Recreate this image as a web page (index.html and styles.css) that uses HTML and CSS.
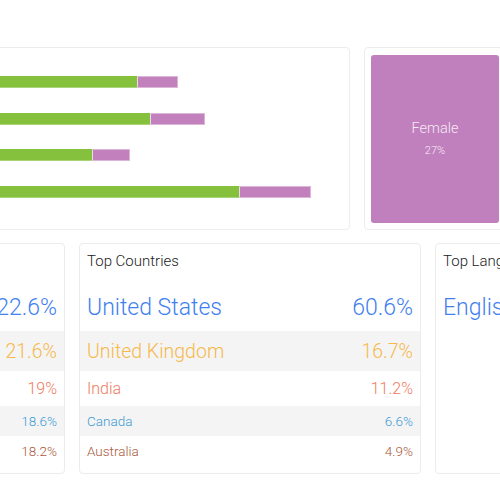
FILE: index.html
```html
<!DOCTYPE html>
<html>
<head>
<meta charset="utf-8">
<link rel="stylesheet" href="styles.css">
</head>
<body>
<div class="dash">
  <div class="row-top">
    <div class="card card-bars">
      <div class="bars">
        <div class="bar"><span class="seg seg-m" style="width:177px"></span><span class="seg seg-f" style="width:41px"></span></div>
        <div class="bar"><span class="seg seg-m" style="width:190px"></span><span class="seg seg-f" style="width:55px"></span></div>
        <div class="bar"><span class="seg seg-m" style="width:132px"></span><span class="seg seg-f" style="width:38px"></span></div>
        <div class="bar"><span class="seg seg-m" style="width:279px"></span><span class="seg seg-f" style="width:72px"></span></div>
      </div>
    </div>
    <div class="card card-gender">
      <div class="tile">
        <div class="tile-label">Female</div>
        <div class="tile-value">27%</div>
      </div>
    </div>
  </div>
  <div class="row-bottom">
    <div class="card list-card">
      <div class="card-title"></div>
      <div class="item s1 c-blue"><span></span><span>22.6%</span></div>
      <div class="item s2 c-yellow alt"><span></span><span>21.6%</span></div>
      <div class="item s3 c-coral"><span></span><span>19%</span></div>
      <div class="item s4 c-sky alt"><span></span><span>18.6%</span></div>
      <div class="item s5 c-brown"><span></span><span>18.2%</span></div>
    </div>
    <div class="card list-card">
      <div class="card-title">Top Countries</div>
      <div class="item s1 c-blue"><span>United States</span><span>60.6%</span></div>
      <div class="item s2 c-yellow alt"><span>United Kingdom</span><span>16.7%</span></div>
      <div class="item s3 c-coral"><span>India</span><span>11.2%</span></div>
      <div class="item s4 c-sky alt"><span>Canada</span><span>6.6%</span></div>
      <div class="item s5 c-brown"><span>Australia</span><span>4.9%</span></div>
    </div>
    <div class="card list-card">
      <div class="card-title">Top Languages</div>
      <div class="item s1 c-blue"><span>English</span><span></span></div>
    </div>
  </div>
</div>
</body>
</html>
```
FILE: styles.css
```css
html, body {
  margin: 0;
  background: #ffffff;
}
body {
  padding-top: 47px;
  overflow: hidden;
  width: 500px;
  height: 500px;
  box-sizing: border-box;
  font-family: Roboto, "Liberation Sans", Arial, sans-serif;
  font-weight: 300;
  color: #333;
}
.dash {
  display: flex;
  flex-direction: column;
  gap: 13px;
}
.card {
  box-sizing: border-box;
  border: 1px solid #ececec;
  border-radius: 4px;
  background: #fff;
  flex: none;
}
.row-top {
  display: flex;
  gap: 14px;
  margin-left: -300px;
  height: 183px;
}
.card-bars {
  width: 650px;
  height: 100%;
  padding: 28px 0 0 259px;
}
.bars {
  display: flex;
  flex-direction: column;
  gap: 24.67px;
}
.bar {
  display: flex;
  height: 12px;
}
.seg {
  display: block;
  height: 12px;
  box-sizing: border-box;
}
.seg-m {
  background: #85c13c;
  border-bottom: 1px solid #a9d479;
}
.seg-f {
  background: #c280bd;
  border: 1px solid #dcb6d9;
  border-left: 1px solid #e9dbe8;
}
.card-gender {
  width: 200px;
  height: 100%;
  padding: 7px 6px 6px;
  display: flex;
}
.tile {
  width: 128px;
  background: #c07fbd;
  border-radius: 3px;
  display: flex;
  flex-direction: column;
  align-items: center;
  justify-content: center;
  color: #f6e9f5;
  padding-bottom: 0;
  box-sizing: border-box;
}
.tile-label {
  font-size: 14.5px;
  line-height: 18px;
}
.tile-value {
  font-size: 11px;
  line-height: 14px;
  margin-top: 6px;
}
.row-bottom {
  display: flex;
  gap: 14px;
  margin-left: -277px;
}
.list-card {
  width: 342px;
  height: 231px;
}
.card-title {
  box-sizing: border-box;
  height: 40px;
  padding: 8px 7px 0;
  font-size: 15px;
  line-height: 18px;
  color: #222;
  font-weight: 300;
}
.item {
  display: flex;
  justify-content: space-between;
  align-items: center;
  padding: 0 7px 0 7px;
  white-space: nowrap;
}
.item.alt {
  background: #f4f4f4;
}
.s1 { height: 47px; font-size: 23px; }
.s2 { height: 40px; font-size: 19.5px; }
.s3 { height: 35px; font-size: 16px; }
.s4 { height: 30px; font-size: 13.5px; }
.s5 { height: 30px; font-size: 13.5px; }
.c-blue { color: #3f7ff0; }
.c-yellow { color: #f6b94b; }
.c-coral { color: #f07a5e; }
.c-sky { color: #3d9ad5; }
.c-brown { color: #a9583a; }
```
